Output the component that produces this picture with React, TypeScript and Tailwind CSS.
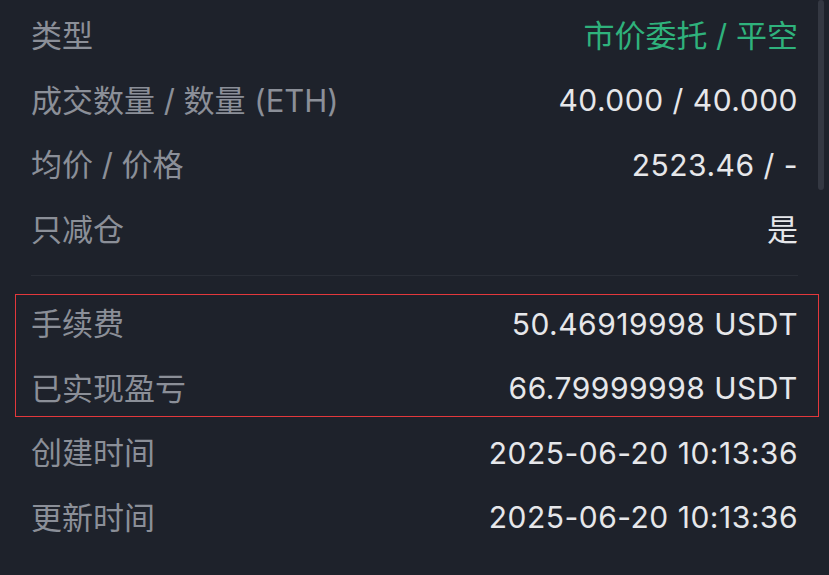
import React from "react";

const font = {
  fontFamily:
    'Inter, "Noto Sans CJK SC", "Noto Sans", sans-serif',
};

function Row({ label, value, kind }: { label: string; value: string; kind?: "green" | "cjk" }) {
  let cls = "text-[30px] tracking-[0.5px] text-[#e6e7ea]";
  if (kind === "green") cls = "text-[31px] text-[#2fb27c]";
  if (kind === "cjk") cls = "text-[31px] text-[#e6e7ea]";
  return (
    <div className="flex h-[64.5px] items-center justify-between">
      <span className="text-[31px] text-[#8b8f98]">{label}</span>
      <span className={cls}>{value}</span>
    </div>
  );
}

export default function App() {
  return (
    <div className="relative h-[575px] w-[829px] overflow-hidden bg-[#1e222b]" style={font}>
      <div className="px-[31px] pt-[4px]">
        <Row label="类型" value="市价委托 / 平空" kind="green" />
        <Row label="成交数量 / 数量 (ETH)" value="40.000 / 40.000" />
        <Row label="均价 / 价格" value="2523.46 / -" />
        <Row label="只减仓" value="是" kind="cjk" />
        <div className="mt-[13px] h-px bg-[#2a2e37]" />
        <div className="mt-[16px]">
          <Row label="手续费" value="50.46919998 USDT" />
          <Row label="已实现盈亏" value="66.79999998 USDT" />
          <Row label="创建时间" value="2025-06-20 10:13:36" />
          <Row label="更新时间" value="2025-06-20 10:13:36" />
        </div>
      </div>
      <div className="absolute left-[15px] top-[294px] h-[123px] w-[804px] border border-[#e3383c]" />
      <div className="absolute left-[818px] top-0 h-[190px] w-[6px] rounded-full bg-[#343842]" />
    </div>
  );
}
